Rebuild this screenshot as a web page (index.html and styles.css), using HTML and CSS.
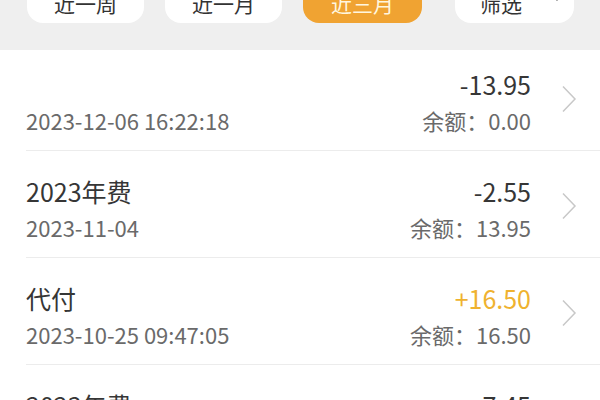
FILE: index.html
```html
<!DOCTYPE html>
<html lang="zh">
<head>
<meta charset="utf-8">
<link rel="stylesheet" href="styles.css">
</head>
<body>
<div class="bar">
  <div class="tabs">
    <div class="tab">近一周</div>
    <div class="tab">近一月</div>
    <div class="tab active">近三月</div>
    <div class="tab filter">筛选<svg class="caret" width="10" height="8" viewBox="0 0 10 8"><path d="M1 1 L5 5 L9 1" fill="none" stroke="#666" stroke-width="1.4"/></svg></div>
  </div>
</div>
<div class="list">
  <div class="row first">
    <div class="left">
      <div class="title">&nbsp;</div>
      <div class="date">2023-12-06 16:22:18</div>
    </div>
    <div class="right">
      <div class="amount">-13.95</div>
      <div class="balance">余额：0.00</div>
    </div>
    <svg class="chev" width="16" height="28" viewBox="0 0 16 28"><path d="M2 1.5 L14 14 L2 26.5" fill="none" stroke="#c8c8c8" stroke-width="1.5"/></svg>
  </div>
  <div class="row">
    <div class="left">
      <div class="title">2023年费</div>
      <div class="date">2023-11-04</div>
    </div>
    <div class="right">
      <div class="amount">-2.55</div>
      <div class="balance">余额：13.95</div>
    </div>
    <svg class="chev" width="16" height="28" viewBox="0 0 16 28"><path d="M2 1.5 L14 14 L2 26.5" fill="none" stroke="#c8c8c8" stroke-width="1.5"/></svg>
  </div>
  <div class="row">
    <div class="left">
      <div class="title">代付</div>
      <div class="date">2023-10-25 09:47:05</div>
    </div>
    <div class="right">
      <div class="amount plus">+16.50</div>
      <div class="balance">余额：16.50</div>
    </div>
    <svg class="chev" width="16" height="28" viewBox="0 0 16 28"><path d="M2 1.5 L14 14 L2 26.5" fill="none" stroke="#c8c8c8" stroke-width="1.5"/></svg>
  </div>
  <div class="row">
    <div class="left">
      <div class="title">2023年费</div>
      <div class="date">2023-10-01</div>
    </div>
    <div class="right">
      <div class="amount">-7.45</div>
      <div class="balance">余额：0.00</div>
    </div>
    <svg class="chev" width="16" height="28" viewBox="0 0 16 28"><path d="M2 1.5 L14 14 L2 26.5" fill="none" stroke="#c8c8c8" stroke-width="1.5"/></svg>
  </div>
</div>
</body>
</html>
```

FILE: styles.css
```css
html, body {
  margin: 0;
  padding: 0;
  background: #ffffff;
  font-family: "Noto Sans CJK SC", "Noto Sans", sans-serif;
  overflow: hidden;
}
.bar {
  background: #efefef;
  height: 50px;
  overflow: hidden;
}
.tabs {
  display: flex;
  padding-left: 27px;
  padding-right: 26px;
  margin-top: -20px;
}
.tab {
  width: 117px;
  height: 43px;
  margin-right: 21px;
  background: #ffffff;
  border-radius: 16px;
  display: flex;
  align-items: center;
  justify-content: center;
  font-size: 21px;
  padding-top: 2px;
  box-sizing: border-box;
  color: #333333;
}
.tab.active {
  width: 119px;
  background: #f0a332;
  color: #fff6df;
}
.tab.filter {
  width: 119px;
  margin-left: auto;
  margin-right: 0;
  justify-content: flex-start;
  padding-left: 25px;
  gap: 30px;
}
.caret {
  margin-top: -8px;
}
.list {
  display: flex;
  flex-direction: column;
}
.row {
  margin-left: 26px;
  padding: 22px 23px 12px 0;
  border-bottom: 1px solid #ececec;
  display: flex;
  align-items: center;
}
.row.first {
  padding-top: 16px;
}
.left {
  flex: 1;
}
.right {
  text-align: right;
  margin-right: 30px;
}
.title, .amount {
  font-size: 25px;
  line-height: 36px;
  color: #363636;
}
.date, .balance {
  font-size: 22px;
  line-height: 36px;
  color: #6a6a6a;
}
.amount.plus {
  color: #efb22f;
}
.chev {
  display: block;
  margin-top: -6px;
}
```
